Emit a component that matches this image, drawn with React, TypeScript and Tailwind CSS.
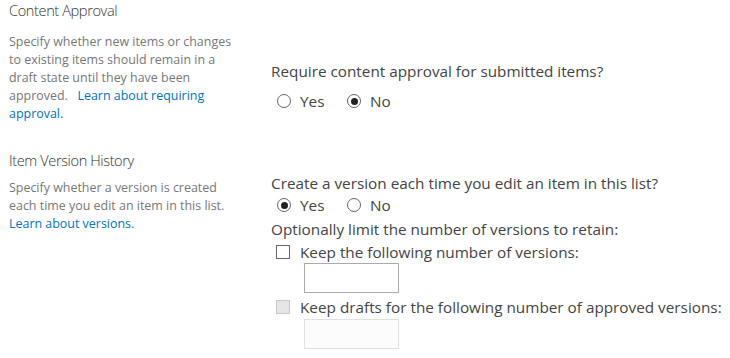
import React from "react";

const font = { fontFamily: '"Open Sans", "Noto Sans", sans-serif' };

function Radio({ checked }: { checked?: boolean }) {
  return (
    <span className="w-[14px] h-[14px] rounded-full border border-[#666] bg-white flex items-center justify-center shrink-0">
      {checked && <span className="w-[7px] h-[7px] rounded-full bg-[#222]" />}
    </span>
  );
}

function RadioRow({ yes }: { yes: boolean }) {
  return (
    <div className="flex items-center h-[20px] pl-[6px] text-[15.3px] text-[#444]">
      <Radio checked={yes} />
      <span className="ml-[9px] w-[47px]">Yes</span>
      <Radio checked={!yes} />
      <span className="ml-[9px]">No</span>
    </div>
  );
}

export default function App() {
  return (
    <div className="w-[730px] h-[358px] bg-white overflow-hidden" style={font}>
      <div className="flex h-[150px]">
        <div className="w-[271px] shrink-0 pl-[9px] pr-[34px]">
          <div className="text-[14.6px] leading-[20px] tracking-[-0.4px] font-light text-[#333]">Content Approval</div>
          <div className="mt-[13px] text-[12.45px] leading-[18px] text-[#777]">
            Specify whether new items or changes to existing items should remain in a draft state until they have been approved.{"\u00a0\u00a0 "}
            <span className="text-[#0072c6]">Learn about requiring approval.</span>
          </div>
        </div>
        <div className="flex-1 pt-[61px]">
          <div className="text-[15.3px] leading-[20px] text-[#444]">Require content approval for submitted items?</div>
          <div className="mt-[10px]">
            <RadioRow yes={false} />
          </div>
        </div>
      </div>
      <div className="flex">
        <div className="w-[271px] shrink-0 pl-[9px] pr-[34px]">
          <div className="text-[14.6px] leading-[20px] tracking-[-0.4px] font-light text-[#333]">Item Version History</div>
          <div className="mt-[9px] text-[12.45px] leading-[18px] text-[#777]">
            Specify whether a version is created each time you edit an item in this list.{" "}
            <span className="text-[#0072c6]">Learn about versions.</span>
          </div>
        </div>
        <div className="flex-1 pt-[23px] text-[15.3px] leading-[20px] text-[#444]">
          <div>Create a version each time you edit an item in this list?</div>
          <div className="mt-[2px]">
            <RadioRow yes={true} />
          </div>
          <div className="mt-[4px]">Optionally limit the number of versions to retain:</div>
          <div className="mt-[3px] flex items-center h-[20px] pl-[5px]">
            <span className="w-[14px] h-[14px] border border-[#666] bg-white shrink-0" />
            <span className="ml-[10px]">Keep the following number of versions:</span>
          </div>
          <div className="mt-[1px] ml-[33px] w-[95px] h-[30px] border border-[#ababab] bg-white" />
          <div className="mt-[4px] flex items-center h-[20px] pl-[5px]">
            <span className="w-[14px] h-[14px] border border-[#c8c8c8] bg-[#e6e6e6] shrink-0" />
            <span className="ml-[10px]">Keep drafts for the following number of approved versions:</span>
          </div>
          <div className="mt-[2px] ml-[33px] w-[95px] h-[30px] border border-[#e1e1e1] bg-[#fcfcfc]" />
        </div>
      </div>
    </div>
  );
}
